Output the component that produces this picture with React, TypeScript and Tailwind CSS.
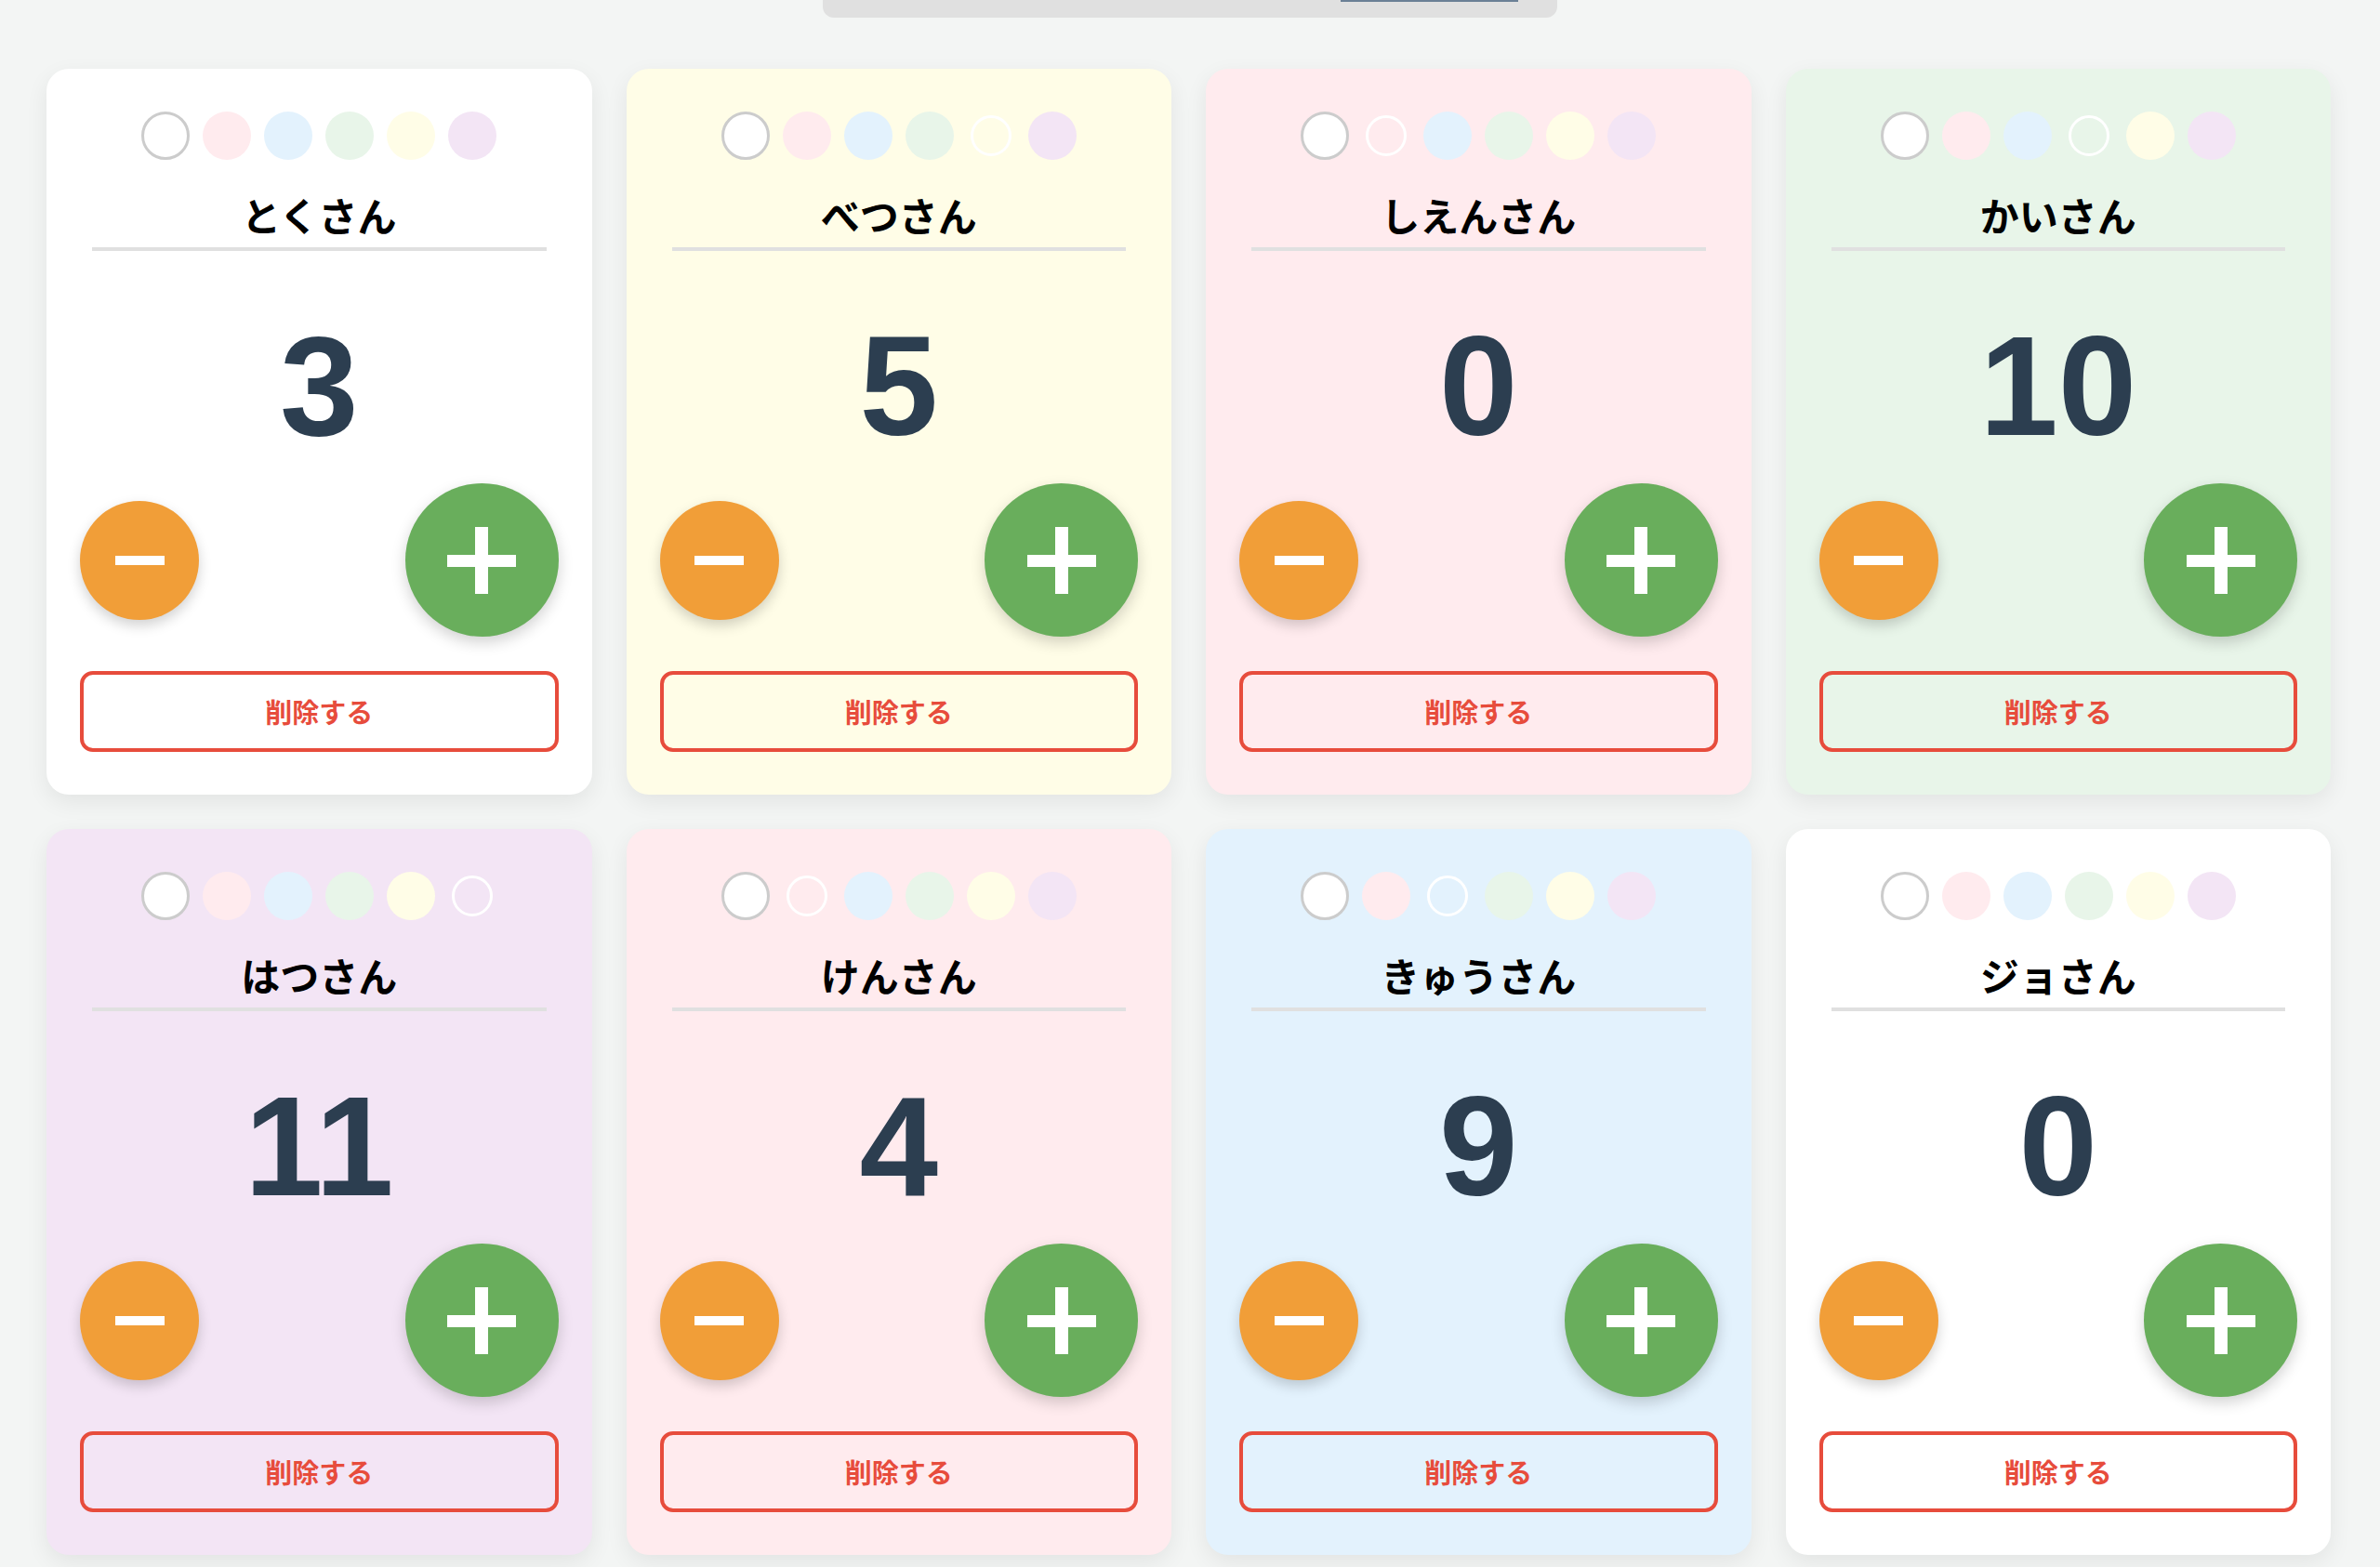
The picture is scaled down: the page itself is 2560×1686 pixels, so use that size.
import React from 'react';

type Person = {
  name: string;
  count: number;
  color: number;
};

// swatch palette, index 0 is plain white
const swatchBg = ['bg-white', 'bg-[#ffebee]', 'bg-[#e3f2fd]', 'bg-[#e8f5e9]', 'bg-[#fffde7]', 'bg-[#f3e5f5]'];

const people: Person[] = [
  { name: 'とくさん', count: 3, color: 0 },
  { name: 'べつさん', count: 5, color: 4 },
  { name: 'しえんさん', count: 0, color: 1 },
  { name: 'かいさん', count: 10, color: 3 },
  { name: 'はつさん', count: 11, color: 5 },
  { name: 'けんさん', count: 4, color: 1 },
  { name: 'きゅうさん', count: 9, color: 2 },
  { name: 'ジョさん', count: 0, color: 0 },
];

function Swatches({ selected }: { selected: number }) {
  return (
    <div className="flex justify-center gap-[14px]">
      {swatchBg.map((bg, i) => {
        if (i === 0) {
          return <span key={i} className="size-[52px] rounded-full border-[3px] border-[#cccccc] bg-white" />;
        }
        if (i === selected) {
          return (
            <span key={i} className="size-[52px] flex items-center justify-center">
              <span className={`size-[44px] rounded-full border-[3px] border-white ${bg}`} />
            </span>
          );
        }
        return <span key={i} className={`size-[52px] rounded-full ${bg}`} />;
      })}
    </div>
  );
}

function CounterCard({ person }: { person: Person }) {
  return (
    <div
      className={`flex flex-col rounded-[24px] pt-[46px] px-[36px] pb-[46px] shadow-[0_8px_24px_rgba(0,0,0,0.07)] ${swatchBg[person.color]}`}
    >
      <Swatches selected={person.color} />

      <div className="mt-[39px] text-center text-[42px] leading-[40px] font-bold text-black">{person.name}</div>
      <div className="mt-[15px] mx-[13px] h-[4px] bg-[#e0e0e0]" />

      <div className="mt-[69px] text-center text-[152px] leading-[152px] font-bold text-[#2c3e50] font-['Liberation_Sans',Arial,sans-serif]">
        {person.count}
      </div>

      <div className="mt-[29px] h-[165px] flex items-center justify-between">
        <button className="size-[128px] rounded-full bg-[#f19e38] flex items-center justify-center shadow-[0_6px_14px_rgba(0,0,0,0.18)]">
          <svg width="53" height="10" viewBox="0 0 53 10">
            <rect x="0" y="0" width="53" height="10" fill="#ffffff" />
          </svg>
        </button>
        <button className="size-[165px] rounded-full bg-[#69ae5c] flex items-center justify-center shadow-[0_6px_16px_rgba(0,0,0,0.18)]">
          <svg width="74" height="72" viewBox="0 0 74 72">
            <rect x="0" y="30" width="74" height="13" fill="#ffffff" />
            <rect x="30" y="0" width="14" height="72" fill="#ffffff" />
          </svg>
        </button>
      </div>

      <button className="mt-[37px] h-[87px] rounded-[14px] border-[4px] border-[#e74c3c] text-[29px] font-bold text-[#e74c3c]">
        削除する
      </button>
    </div>
  );
}

export default function App() {
  return (
    <div className="min-h-screen bg-[#f3f5f4] font-['Noto_Sans_CJK_JP','Noto_Sans',sans-serif]">
      <div className="mx-auto w-[790px] h-[19px] rounded-b-[12px] bg-[#e0e0e0]">
        <div className="ml-[557px] w-[191px] h-[2px] bg-[#6b8096]" />
      </div>

      <div className="mt-[55px] pl-[50px] pr-[53px] pb-[14px] grid grid-cols-4 gap-[37px]">
        {people.map((p) => (
          <CounterCard key={p.name} person={p} />
        ))}
      </div>
    </div>
  );
}
